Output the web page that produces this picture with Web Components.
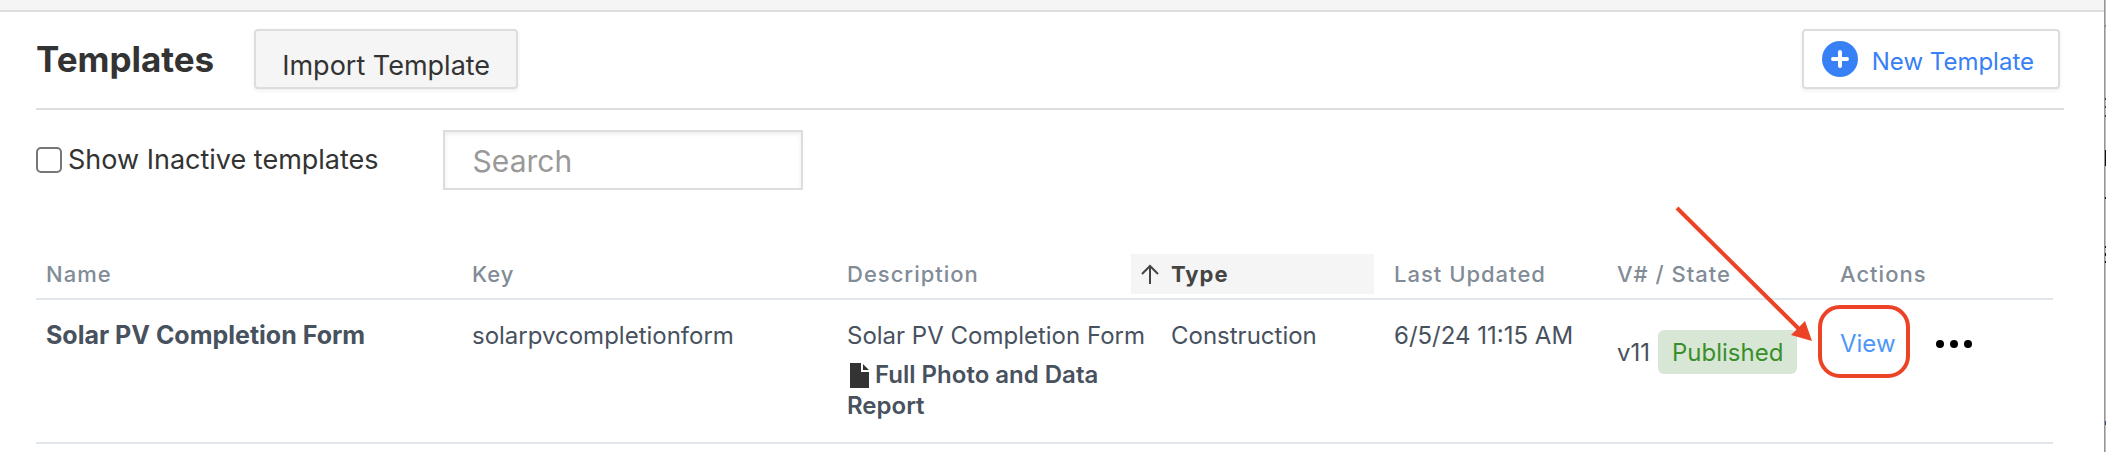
<!DOCTYPE html>
<html lang="en">
<head>
<meta charset="utf-8">
<title>Templates</title>
<style>
  body { margin: 0; background: #fff; color: #333; font-family: Inter, "Liberation Sans", sans-serif; }
</style>
</head>
<body>
<app-shell>
  <page-header slot="header" heading="Templates">
    <app-button slot="lead" variant="muted">Import Template</app-button>
    <app-button slot="action" variant="primary" icon="plus">New Template</app-button>
  </page-header>
  <filter-bar></filter-bar>
  <template-table></template-table>
</app-shell>

<script>
const define = (name, markup, setup) => {
  const tpl = document.createElement('template');
  tpl.innerHTML = '<style>*{box-sizing:border-box}</style>' + markup;
  customElements.define(name, class extends HTMLElement {
    connectedCallback() {
      if (this.shadowRoot) return;
      this.attachShadow({ mode: 'open' }).append(tpl.content.cloneNode(true));
      if (setup) setup(this, this.shadowRoot);
    }
  });
};

define('app-shell', `
  <style>
    :host { display: flex; min-height: 100vh; background: #fff; }
    .page { flex: 1; min-width: 0; }
    .bar { height: 12px; background: #f5f5f5; border-bottom: 2px solid #ddd; }
    main { padding: 0 40px 0 36px; }
    .edge { width: 2px; background: #bdbdbd; border-left: 1px solid #969696; }
    .edge svg { display: block; }
  </style>
  <div class="page">
    <div class="bar"></div>
    <main><slot name="header"></slot><slot></slot></main>
  </div>
  <div class="edge" aria-hidden="true">
    <svg width="1" height="430" viewBox="0 0 1 430" shape-rendering="crispEdges">
      <path fill="#b5707c" d="M0 25h1v2H0z"/>
      <path fill="#444" d="M0 98h1v2H0zM0 106h1v2H0zM0 115h1v2H0z"/>
      <path fill="#111" d="M0 150h1v16H0zM0 197h1v2H0zM0 246h1v2H0zM0 253h1v3H0zM0 261h1v2H0z"/>
      <path fill="#2c4f80" d="M0 421h1v4H0z"/>
    </svg>
  </div>`);

define('page-header', `
  <style>
    :host { display: flex; align-items: center; gap: 40px; padding: 17px 4px 19px 0; border-bottom: 2px solid #ddd; }
    h1 { margin: 0; font-size: 35px; line-height: 40px; font-weight: 700; }
    .action { margin-left: auto; }
  </style>
  <h1></h1>
  <slot name="lead"></slot>
  <div class="action"><slot name="action"></slot></div>`,
  (el, root) => { root.querySelector('h1').textContent = el.getAttribute('heading'); });

define('app-button', `
  <style>
    :host { display: block; }
    button { display: flex; align-items: center; height: 60px; margin: 0; padding: 14px 26px 0; border: 2px solid #ddd; border-radius: 4px;
      background: #f5f5f5; color: #333; font: 400 27px/30px Inter, "Liberation Sans", sans-serif; box-shadow: 0 2px 4px rgba(0,0,0,.06); white-space: nowrap; }
    svg { display: none; }
    :host([variant=primary]) button { background: #fff; color: #3880f6; font-size: 24px; padding: 0 24px 0 18px; gap: 14px; }
    :host([variant=primary]) .label { padding-top: 6px; }
    :host([icon=plus]) svg { display: block; }
  </style>
  <button type="button">
    <svg width="36" height="36" viewBox="0 0 36 36" aria-hidden="true"><circle cx="18" cy="18" r="18" fill="#3880f6"/><path d="M18 11v14M11 18h14" stroke="#fff" stroke-width="4" stroke-linecap="round"/></svg>
    <span class="label"><slot></slot></span>
  </button>`);

define('filter-bar', `
  <style>
    :host { display: flex; align-items: center; gap: 64px; margin-top: 20px; }
    label { display: flex; align-items: center; gap: 6px; font-size: 27px; line-height: 30px; white-space: nowrap; }
    input { margin: 0; appearance: none; background: #fff; }
    input[type=checkbox] { width: 26px; height: 26px; border: 2px solid #767676; border-radius: 5px; }
    input[type=search] { width: 360px; height: 60px; padding: 2px 28px 0; border: 2px solid #ddd; border-radius: 0; color: #333;
      font: 400 30px/36px Inter, "Liberation Sans", sans-serif; box-shadow: inset 0 2px 4px rgba(0,0,0,.08); }
    ::placeholder { color: #999; opacity: 1; }
  </style>
  <label for="inactive"><input type="checkbox" id="inactive">Show Inactive templates</label>
  <input type="search" placeholder="Search" aria-label="Search">`);

define('state-badge', `
  <style>
    :host { display: inline-block; padding: 7px 14px 6px; border-radius: 6px; background: #d8e7d5; color: #3a8f2b; line-height: 31px; }
  </style><slot></slot>`);

define('view-callout', `
  <style>
    :host { display: inline-block; position: relative; }
    .ring { position: absolute; inset: -23px -14px -19px -22px; border: 4px solid #ec4226; border-radius: 22px; pointer-events: none; }
    svg { position: absolute; right: calc(100% + 26px); bottom: 15px; pointer-events: none; }
  </style>
  <slot></slot>
  <span class="ring"></span>
  <svg width="140" height="140" viewBox="0 0 140 140" aria-hidden="true"><path d="M3 4L126 126" stroke="#ec4226" stroke-width="4"/><path d="M138 137l-21-6 14-14z" fill="#ec4226"/></svg>`);

define('template-table', `
  <style>
    :host { display: block; margin: 64px 12px 0 0; color: #48515e; }
    table { width: 100%; table-layout: fixed; border-collapse: separate; border-spacing: 0; font-size: 24px; line-height: 31px; }
    th, td { text-align: left; padding: 0 10px; white-space: nowrap; border-bottom: 2px solid #e0e6eb; }
    .wide { width: 426px; }
    .key { width: 375px; }
    .text { width: 324px; }
    .small { width: 223px; }
    th { height: 46px; padding-bottom: 4px; font-size: 22px; line-height: 40px; font-weight: 500; letter-spacing: 1px; color: #818c97; }
    td { padding-top: 20px; padding-bottom: 21px; vertical-align: top; }
    .sorted { display: flex; align-items: center; gap: 12px; height: 40px; margin-left: -40px; padding-left: 10px; background: #f5f5f5; color: #444; font-weight: 700; }
    .name { font-size: 25px; font-weight: 700; }
    .report { margin-top: 8px; white-space: normal; font-weight: 600; }
    .report svg { vertical-align: -5px; margin-right: 5px; margin-left: 3px; }
    .state { display: flex; align-items: center; gap: 8px; margin-top: 10px; }
    .actions { display: flex; align-items: center; gap: 40px; margin-top: 8px; }
    a { color: #4d97fb; text-decoration: none; }
    button { display: block; padding: 0; border: 0; background: none; }
    button svg { display: block; }
  </style>
  <table>
    <colgroup><col class="wide"><col class="key"><col class="text"><col class="small" span="4"></colgroup>
    <thead><tr>
      <th>Name</th><th>Key</th><th>Description</th>
      <th aria-sort="ascending"><div class="sorted"><svg width="18" height="20" viewBox="0 0 18 20" fill="none" stroke="#444" stroke-width="2" aria-hidden="true"><path d="M9 20V2M1 10l8-8 8 8"/></svg>Type</div></th>
      <th>Last Updated</th><th>V# / State</th><th>Actions</th>
    </tr></thead>
    <tbody><tr>
      <td class="name">Solar PV Completion Form</td>
      <td>solarpvcompletionform</td>
      <td>Solar PV Completion Form
        <div class="report"><svg width="20" height="25" viewBox="0 0 20 25" aria-hidden="true"><path fill="#333" d="M0 0h11v9h8v16H0zM13 1l6 6h-6z"/></svg>Full Photo and Data Report</div></td>
      <td>Construction</td>
      <td>6/5/24 11:15 AM</td>
      <td><div class="state">v11 <state-badge>Published</state-badge></div></td>
      <td><div class="actions"><view-callout><a href="#view">View</a></view-callout><button type="button" aria-label="More actions"><svg width="36" height="8" viewBox="0 0 36 8" aria-hidden="true"><circle cx="4" cy="4" r="4"/><circle cx="18" cy="4" r="4"/><circle cx="32" cy="4" r="4"/></svg></button></div></td>
    </tr></tbody>
  </table>`);
</script>
</body>
</html>
